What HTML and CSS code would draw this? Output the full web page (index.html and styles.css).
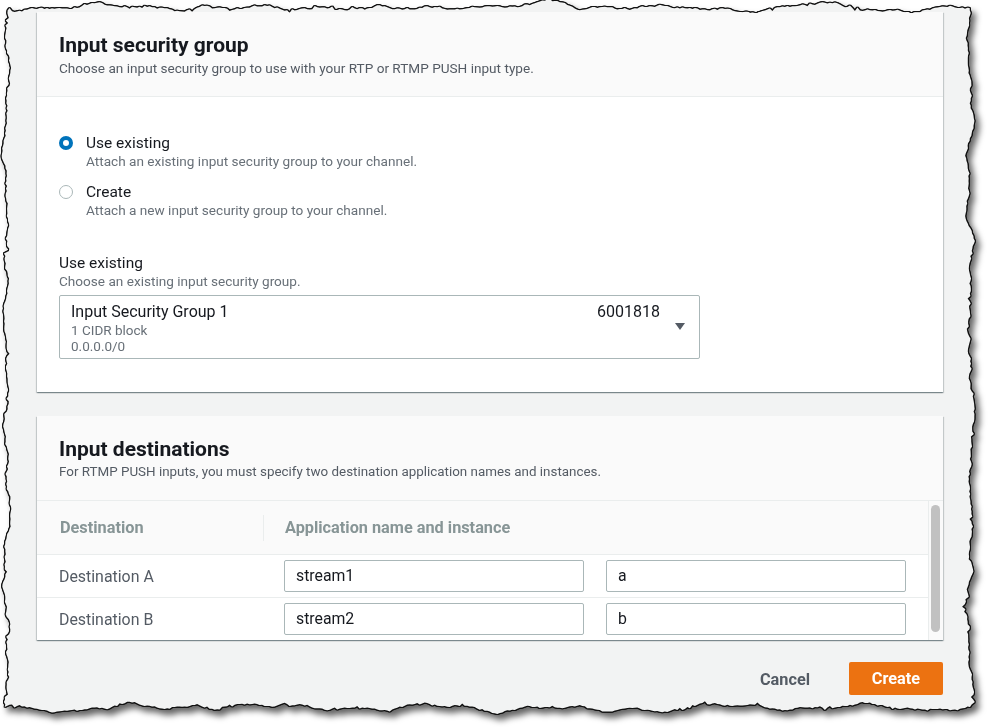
FILE: index.html
```html
<!DOCTYPE html>
<html lang="en">
<head>
<meta charset="utf-8">
<title>Input security group</title>
<link rel="stylesheet" href="styles.css">
</head>
<body>
<div class="sheet">
  <div class="paper" id="paper">
    <section class="card card-first">
      <header class="card-head">
        <h2>Input security group</h2>
        <p>Choose an input security group to use with your RTP or RTMP PUSH input type.</p>
      </header>
      <div class="card-body">
        <div class="radio-group">
          <div class="radio">
            <span class="dot dot-on"></span>
            <div class="rtext">
              <div class="rlabel">Use existing</div>
              <div class="rdesc">Attach an existing input security group to your channel.</div>
            </div>
          </div>
          <div class="radio">
            <span class="dot"></span>
            <div class="rtext">
              <div class="rlabel">Create</div>
              <div class="rdesc">Attach a new input security group to your channel.</div>
            </div>
          </div>
        </div>
        <div class="field">
          <div class="flabel">Use existing</div>
          <div class="fdesc">Choose an existing input security group.</div>
          <div class="select">
            <div class="sel-main">
              <div class="sel-row"><span>Input Security Group 1</span><span>6001818</span></div>
              <div class="sel-sub">1 CIDR block</div>
              <div class="sel-sub">0.0.0.0/0</div>
            </div>
            <div class="sel-caret">
              <svg width="10" height="8" viewBox="0 0 10 8"><path d="M0 0 H10 L5 7 Z" fill="#545b64"/></svg>
            </div>
          </div>
        </div>
      </div>
    </section>

    <section class="card">
      <header class="card-head">
        <h2>Input destinations</h2>
        <p class="narrow">For RTMP PUSH inputs, you must specify two destination application names and instances.</p>
      </header>
      <div class="table-area">
        <div class="table">
          <div class="trow thead">
            <div class="c1">Destination</div>
            <div class="c2"><span class="th2">Application name and instance</span></div>
          </div>
          <div class="trow">
            <div class="c1 dest">Destination A</div>
            <div class="c2 inputs">
              <div class="input">stream1</div>
              <div class="input">a</div>
            </div>
          </div>
          <div class="trow">
            <div class="c1 dest">Destination B</div>
            <div class="c2 inputs">
              <div class="input">stream2</div>
              <div class="input">b</div>
            </div>
          </div>
        </div>
        <div class="vscroll"><div class="thumb"></div></div>
      </div>
    </section>

    <div class="footer">
      <button class="btn btn-link">Cancel</button>
      <button class="btn btn-primary">Create</button>
    </div>
  </div>
</div>
<script src="script.js"></script>
</body>
</html>
```

FILE: styles.css
```css
html, body {
  margin: 0;
  padding: 0;
  background: #ffffff;
}
body {
  font-family: Roboto, "Liberation Sans", Arial, sans-serif;
  color: #16191f;
  width: 988px;
  height: 727px;
  overflow: hidden;
}
.sheet {
  width: 988px;
  height: 727px;
  filter: drop-shadow(1px 0 0 #111) drop-shadow(-1px 0 0 #111) drop-shadow(0 1px 0 #111) drop-shadow(0 -1px 0 #111) drop-shadow(4px 5px 3px rgba(0, 0, 0, 0.6));
}
.paper {
  width: 988px;
  height: 727px;
  box-sizing: border-box;
  background: #f2f3f3;
  padding: 12px 45px 0 37px;
  display: flex;
  flex-direction: column;
}
.card {
  background: #ffffff;
  box-shadow: 0 1px 1px 0 rgba(0, 28, 36, 0.3), 1px 1px 1px 0 rgba(0, 28, 36, 0.15), -1px 1px 1px 0 rgba(0, 28, 36, 0.15);
}
.card + .card {
  margin-top: 24px;
}
.card-head {
  background: #fafafa;
  border-bottom: 1px solid #eaeded;
  padding: 21px 22px 20px;
}
.card-head h2 {
  margin: 0;
  font-size: 21px;
  line-height: 24px;
  font-weight: 700;
  color: #16191f;
}
.card-head p {
  margin: 3px 0 0;
  font-size: 13.6px;
  line-height: 16px;
  color: #545b64;
}
.card-head p.narrow {
  font-size: 13.4px;
}
.card-body {
  padding: 36px 22px 33px;
}
.radio-group {
  display: flex;
  flex-direction: column;
  gap: 13px;
}
.radio {
  display: flex;
  align-items: flex-start;
  gap: 13px;
}
.dot {
  width: 14px;
  height: 14px;
  box-sizing: border-box;
  border-radius: 50%;
  border: 1px solid #aab7b8;
  background: #fff;
  margin-top: 3px;
  flex: none;
}
.dot-on {
  border: 4px solid #0073bb;
  background: #fff;
}
.rlabel {
  font-size: 15.5px;
  line-height: 20px;
}
.rdesc {
  font-size: 13.6px;
  line-height: 16px;
  color: #687078;
}
.field {
  margin-top: 35px;
}
.flabel {
  font-size: 15.5px;
  line-height: 20px;
}
.fdesc {
  font-size: 13.6px;
  line-height: 16px;
  color: #687078;
}
.select {
  margin-top: 6px;
  width: 641px;
  height: 64px;
  box-sizing: border-box;
  border: 1px solid #aab7b8;
  border-radius: 2px;
  display: flex;
}
.sel-main {
  flex: 1;
  padding: 6px 0 4px 11px;
}
.sel-row {
  display: flex;
  justify-content: space-between;
  font-size: 16px;
  line-height: 20px;
}
.sel-sub {
  font-size: 13.5px;
  line-height: 16px;
  color: #687078;
}
.sel-caret {
  width: 39px;
  display: flex;
  justify-content: center;
  padding-top: 27px;
  box-sizing: border-box;
}
.sel-caret svg {
  display: block;
}
.table-area {
  display: flex;
}
.table {
  flex: 1;
  border-right: 1px solid #eaeded;
}
.trow {
  display: flex;
  align-items: center;
  height: 43px;
  box-sizing: border-box;
  border-bottom: 1px solid #eaeded;
}
.trow:last-child {
  border-bottom: none;
  height: 42px;
}
.thead {
  height: 54px;
  background: #fafafa;
  font-size: 16.3px;
  font-weight: 700;
  color: #879596;
}
.c1 {
  width: 226px;
  box-sizing: border-box;
  padding-left: 23px;
  flex: none;
}
.c2 {
  flex: 1;
}
.thead .c2 {
  border-left: 1px solid #eaeded;
  height: 26px;
  display: flex;
  align-items: center;
  padding-left: 21px;
}
.dest {
  padding-left: 22px;
  font-size: 15.9px;
  color: #545b64;
}
.inputs {
  display: flex;
  gap: 22px;
  padding-left: 21px;
}
.input {
  width: 300px;
  height: 32px;
  box-sizing: border-box;
  border: 1px solid #aab7b8;
  border-radius: 2px;
  padding-left: 11px;
  font-size: 15.8px;
  line-height: 30px;
  color: #16191f;
}
.vscroll {
  width: 14px;
  padding: 4px 3px 8px 2px;
  box-sizing: border-box;
  background: #fafafa;
  display: flex;
}
.thumb {
  flex: 1;
  border-radius: 5px;
  background: #c1c1c1;
}
.footer {
  margin-top: 22px;
  display: flex;
  justify-content: flex-end;
  align-items: flex-start;
}
.btn {
  font-family: Roboto, "Liberation Sans", Arial, sans-serif;
  font-size: 16.3px;
  font-weight: 700;
  height: 33px;
  border: none;
  border-radius: 2px;
  padding: 0;
  cursor: pointer;
}
.btn-link {
  background: transparent;
  color: #545b64;
  margin-right: 39px;
  margin-top: 1px;
}
.btn-primary {
  background: #ec7211;
  color: #ffffff;
  width: 94px;
}
```

FILE: script.js
```js
(function () {
  var seed = 12345;
  function rnd() {
    seed = (seed * 16807) % 2147483647;
    return (seed - 1) / 2147483646;
  }
  var L = 7, T = 8, R = 970, B = 707;
  var pts = [];
  function edge(x0, y0, x1, y1, nx, ny) {
    var len = Math.hypot(x1 - x0, y1 - y0);
    var n = Math.floor(len / 2.5);
    var off = 0;
    var ph = rnd() * 6.28;
    for (var i = 0; i < n; i++) {
      var t = i / n;
      off += (rnd() - 0.5) * 2.6;
      off *= 0.9;
      var wave = 2.2 * Math.sin(t * len / 23 + ph) + 1.3 * Math.sin(t * len / 9 + ph * 2);
      var spike = rnd() < 0.12 ? (rnd() - 0.5) * 5 : 0;
      var d = off + wave + spike;
      pts.push([x0 + (x1 - x0) * t + nx * d, y0 + (y1 - y0) * t + ny * d]);
    }
  }
  edge(L, T, R, T, 0, 1);
  edge(R, T, R, B, 1, 0);
  edge(R, B, L, B, 0, 1);
  edge(L, B, L, T, 1, 0);
  var poly = pts.map(function (p) { return p[0].toFixed(1) + 'px ' + p[1].toFixed(1) + 'px'; }).join(',');
  document.getElementById('paper').style.clipPath = 'polygon(' + poly + ')';
})();
```
